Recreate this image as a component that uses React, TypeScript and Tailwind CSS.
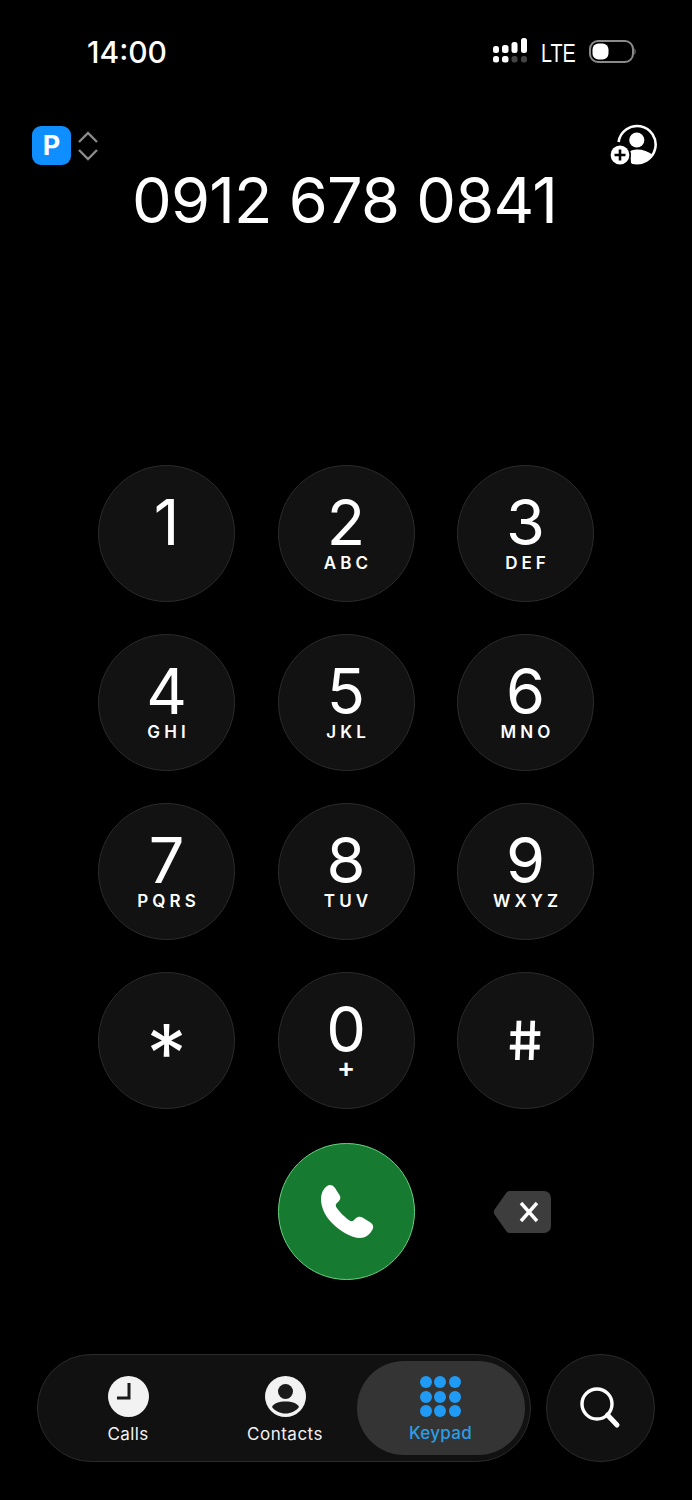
import React from "react";

const keys: [string, string][] = [
  ["1", ""], ["2", "ABC"], ["3", "DEF"],
  ["4", "GHI"], ["5", "JKL"], ["6", "MNO"],
  ["7", "PQRS"], ["8", "TUV"], ["9", "WXYZ"],
];

function Key({ d, l }: { d: string; l: string }) {
  return (
    <div className="w-[137px] h-[137px] rounded-full bg-[#121212] border border-[#2b2b2b] flex flex-col items-center pt-[25px] text-white">
      <div className="h-[62px] text-[63px] leading-[62px] font-[375]">{d}</div>
      {l && <div className="mt-[2px] h-[16px] text-[17px] leading-[16px] font-semibold tracking-[0.24em] pl-[0.24em]">{l}</div>}
    </div>
  );
}

function Signal() {
  return (
    <svg width="36" height="26" viewBox="0 0 36 26" fill="#fff">
      <rect x="1" y="8" width="6" height="7" rx="2.5" />
      <rect x="10" y="7" width="6.5" height="8" rx="2.5" />
      <rect x="19.5" y="4" width="6" height="11" rx="2.5" />
      <rect x="29" y="0" width="6" height="15" rx="2.5" />
      <rect x="1" y="18" width="6" height="6.5" rx="2.5" />
      <rect x="10" y="18" width="6.5" height="6.5" rx="2.5" />
      <rect x="19.5" y="18" width="6" height="6.5" rx="2.5" fill="#444" />
      <rect x="29" y="18" width="6" height="6.5" rx="2.5" fill="#444" />
    </svg>
  );
}

function Battery() {
  return (
    <svg width="48" height="24" viewBox="0 0 48 24">
      <rect x="1" y="1" width="43" height="21" rx="8" fill="none" stroke="#8a8a8a" strokeWidth="2" />
      <rect x="3.5" y="3.5" width="16" height="16" rx="6" fill="#fff" />
      <path d="M45.5 8 C47 9.5 47 13.5 45.5 15 Z" fill="#8a8a8a" />
    </svg>
  );
}

function AddContact() {
  return (
    <svg width="48" height="44" viewBox="0 0 48 44">
      <path d="M8.6 20 A18.6 18.6 0 1 1 22 40.5" fill="none" stroke="#fff" strokeWidth="2.6" />
      <circle cx="26.8" cy="18" r="7.6" fill="#fff" />
      <path d="M21 41 C21 36 20 33 17.5 31 C20 28.5 24 27.5 27 27.5 C33 27.5 38.5 29.5 43 33 A19.5 19.5 0 0 1 21 41 Z" fill="#fff" />
      <circle cx="10" cy="33" r="11" fill="#000" />
      <circle cx="10" cy="33" r="9.4" fill="#fff" />
      <path d="M10 27.5 V38.5 M4.5 33 H15.5" stroke="#000" strokeWidth="2.6" />
    </svg>
  );
}

function Phone() {
  return (
    <svg width="56" height="56" viewBox="0 0 56 56" fill="#fff">
      <path d="M8 2 C11 0 14 1 16 4 L20.5 11 C22 13.5 21.5 15.5 19.5 17.5 L17.5 19.5 C16.5 20.5 16.5 22 17.5 23.5 C20 27.5 26 33.5 30.5 36.5 C32 37.5 33.5 37.5 34.5 36.5 L36.5 34.5 C38.5 32.5 41 32 43.5 33.5 L51.5 38.5 C54 40 55 43 53.5 45.5 C51 50.5 46 54 41 54 C32 54 21 47 13 39 C6 32 2 23 2 15 C2 9.5 4 5 8 2 Z" />
    </svg>
  );
}

function Backspace() {
  return (
    <svg width="58" height="42" viewBox="0 0 58 42">
      <path d="M17 0 H51 A7 7 0 0 1 58 7 V35 A7 7 0 0 1 51 42 H17 C15.5 42 14.5 41.5 13.5 40.5 L1.5 23.5 C0.5 22 0.5 20 1.5 18.5 L13.5 1.5 C14.5 0.5 15.5 0 17 0 Z" fill="#3d3d3d" />
      <path d="M28 12 L44 30 M44 12 L28 30" stroke="#fff" strokeWidth="3.4" />
    </svg>
  );
}

function Clock() {
  return (
    <svg width="41" height="41" viewBox="0 0 41 41">
      <circle cx="20.5" cy="20.5" r="20.5" fill="#f2f2f2" />
      <path d="M21 7 V22 H9" fill="none" stroke="#1a1a1a" strokeWidth="3" />
    </svg>
  );
}

function Person() {
  return (
    <svg width="41" height="41" viewBox="0 0 41 41">
      <circle cx="20.5" cy="20.5" r="20.5" fill="#f2f2f2" />
      <circle cx="20.5" cy="15.5" r="7.5" fill="#1a1a1a" />
      <path d="M7 31 C9 27 14 25.5 20.5 25.5 C27 25.5 32 27 34 31 C31 35 26 37.5 20.5 37.5 C15 37.5 10 35 7 31 Z" fill="#1a1a1a" />
    </svg>
  );
}

function Dots() {
  return (
    <div className="grid grid-cols-[12px_12px_12px] gap-[2.5px] mr-[2px]">
      {[0, 1, 2, 3, 4, 5, 6, 7, 8].map((i) => (
        <div key={i} className="w-[12px] h-[12px] rounded-full bg-[#1f9bf5]" />
      ))}
    </div>
  );
}

function SearchIcon() {
  return (
    <svg width="44" height="46" viewBox="0 0 44 46" fill="none" stroke="#fff">
      <circle cx="18" cy="19" r="15" strokeWidth="3.4" />
      <path d="M28.5 30 L38 40" strokeWidth="5" strokeLinecap="round" />
    </svg>
  );
}

export default function App() {
  return (
    <div className="w-[692px] h-[1500px] bg-black text-white overflow-hidden font-['Inter',sans-serif]">
      <div className="pt-[36px] h-[124px] flex items-start pl-[87px] pr-[55px] justify-between">
        <div className="h-[32px] text-[30px] leading-[32px] font-medium">14:00</div>
        <div className="flex items-center h-[32px] -mt-[1px]">
          <Signal />
          <div className="ml-[13px] mt-[4px] w-[35px] text-[26px] leading-[26px] font-['Liberation_Sans',sans-serif] text-white scale-x-[0.76] origin-left whitespace-nowrap">LTE</div>
          <div className="ml-[13px] mt-[1px]"><Battery /></div>
        </div>
      </div>

      <div className="h-[41px] flex justify-between pl-[32px] pr-[34px]">
        <div className="flex items-start gap-[6px]">
          <div className="mt-[2px] w-[39px] h-[39px] rounded-[9px] bg-[#0f8fff] flex items-center justify-center text-[27px] font-bold leading-none">P</div>
          <svg className="mt-[7px]" width="22" height="30" viewBox="0 0 22 30" fill="none" stroke="#8a8a8a" strokeWidth="2.4">
            <path d="M2 11 L11 2 L20 11 M2 19 L11 28 L20 19" />
          </svg>
        </div>
        <div className="-mt-[2px] h-[44px]"><AddContact /></div>
      </div>

      <div className="mt-[4px] h-[62px] text-center text-[63px] leading-[62px] font-[375] pr-[3px] tracking-[-0.75px]">0912 678 0841</div>

      <div className="mt-[234px] pl-[98px] grid grid-cols-[137px_137px_137px] gap-x-[42.5px] gap-y-[32px]">
        {keys.map(([d, l]) => <Key key={d} d={d} l={l} />)}
        <div className="w-[137px] h-[137px] rounded-full bg-[#121212] border border-[#2b2b2b] flex items-center justify-center">
          <span className="text-[80px] leading-[80px] h-[80px] translate-y-[12px] font-normal">*</span>
        </div>
        <div className="w-[137px] h-[137px] rounded-full bg-[#121212] border border-[#2b2b2b] flex flex-col items-center pt-[25px]">
          <div className="h-[62px] text-[63px] leading-[62px] font-[375]">0</div>
          <div className="h-[16px] text-[27px] leading-[16px] font-semibold">+</div>
        </div>
        <div className="w-[137px] h-[137px] rounded-full bg-[#121212] border border-[#2b2b2b] flex items-center justify-center">
          <span className="text-[54px] leading-[54px] font-medium skew-x-[7deg]">#</span>
        </div>
      </div>

      <div className="mt-[34px] pl-[98px] grid grid-cols-[137px_137px_137px] gap-x-[42.5px]">
        <div />
        <div className="w-[137px] h-[137px] rounded-full bg-[#167a30] border border-[#66d27f] flex items-center justify-center pl-[1px]">
          <Phone />
        </div>
        <div className="flex items-center pl-[36px]"><Backspace /></div>
      </div>

      <div className="mt-[74px] pl-[37px] flex gap-[15px]">
        <div className="w-[494px] h-[108px] rounded-[54px] bg-[#111111] border border-[#2b2b2b] flex items-center pl-[10px]">
          <div className="mt-[4px] w-[160px] flex flex-col items-center">
            <Clock />
            <div className="mt-[6px] text-[17px] leading-[22px] font-normal tracking-[0.4px] text-[#f2f2f2]">Calls</div>
          </div>
          <div className="mt-[4px] ml-[5px] w-[144px] flex flex-col items-center">
            <Person />
            <div className="mt-[6px] text-[17px] leading-[22px] font-normal tracking-[0.5px] text-[#f2f2f2]">Contacts</div>
          </div>
          <div className="w-[168px] h-[94px] rounded-[47px] bg-[#343434] flex flex-col items-center pt-[15px]">
            <Dots />
            <div className="mt-[5px] text-[17px] leading-[22px] font-medium tracking-[0.3px] text-[#2a9fe8] mr-[1px]">Keypad</div>
          </div>
        </div>
        <div className="w-[109px] h-[108px] rounded-full bg-[#111111] border border-[#2b2b2b] flex items-center justify-center">
          <SearchIcon />
        </div>
      </div>
    </div>
  );
}
